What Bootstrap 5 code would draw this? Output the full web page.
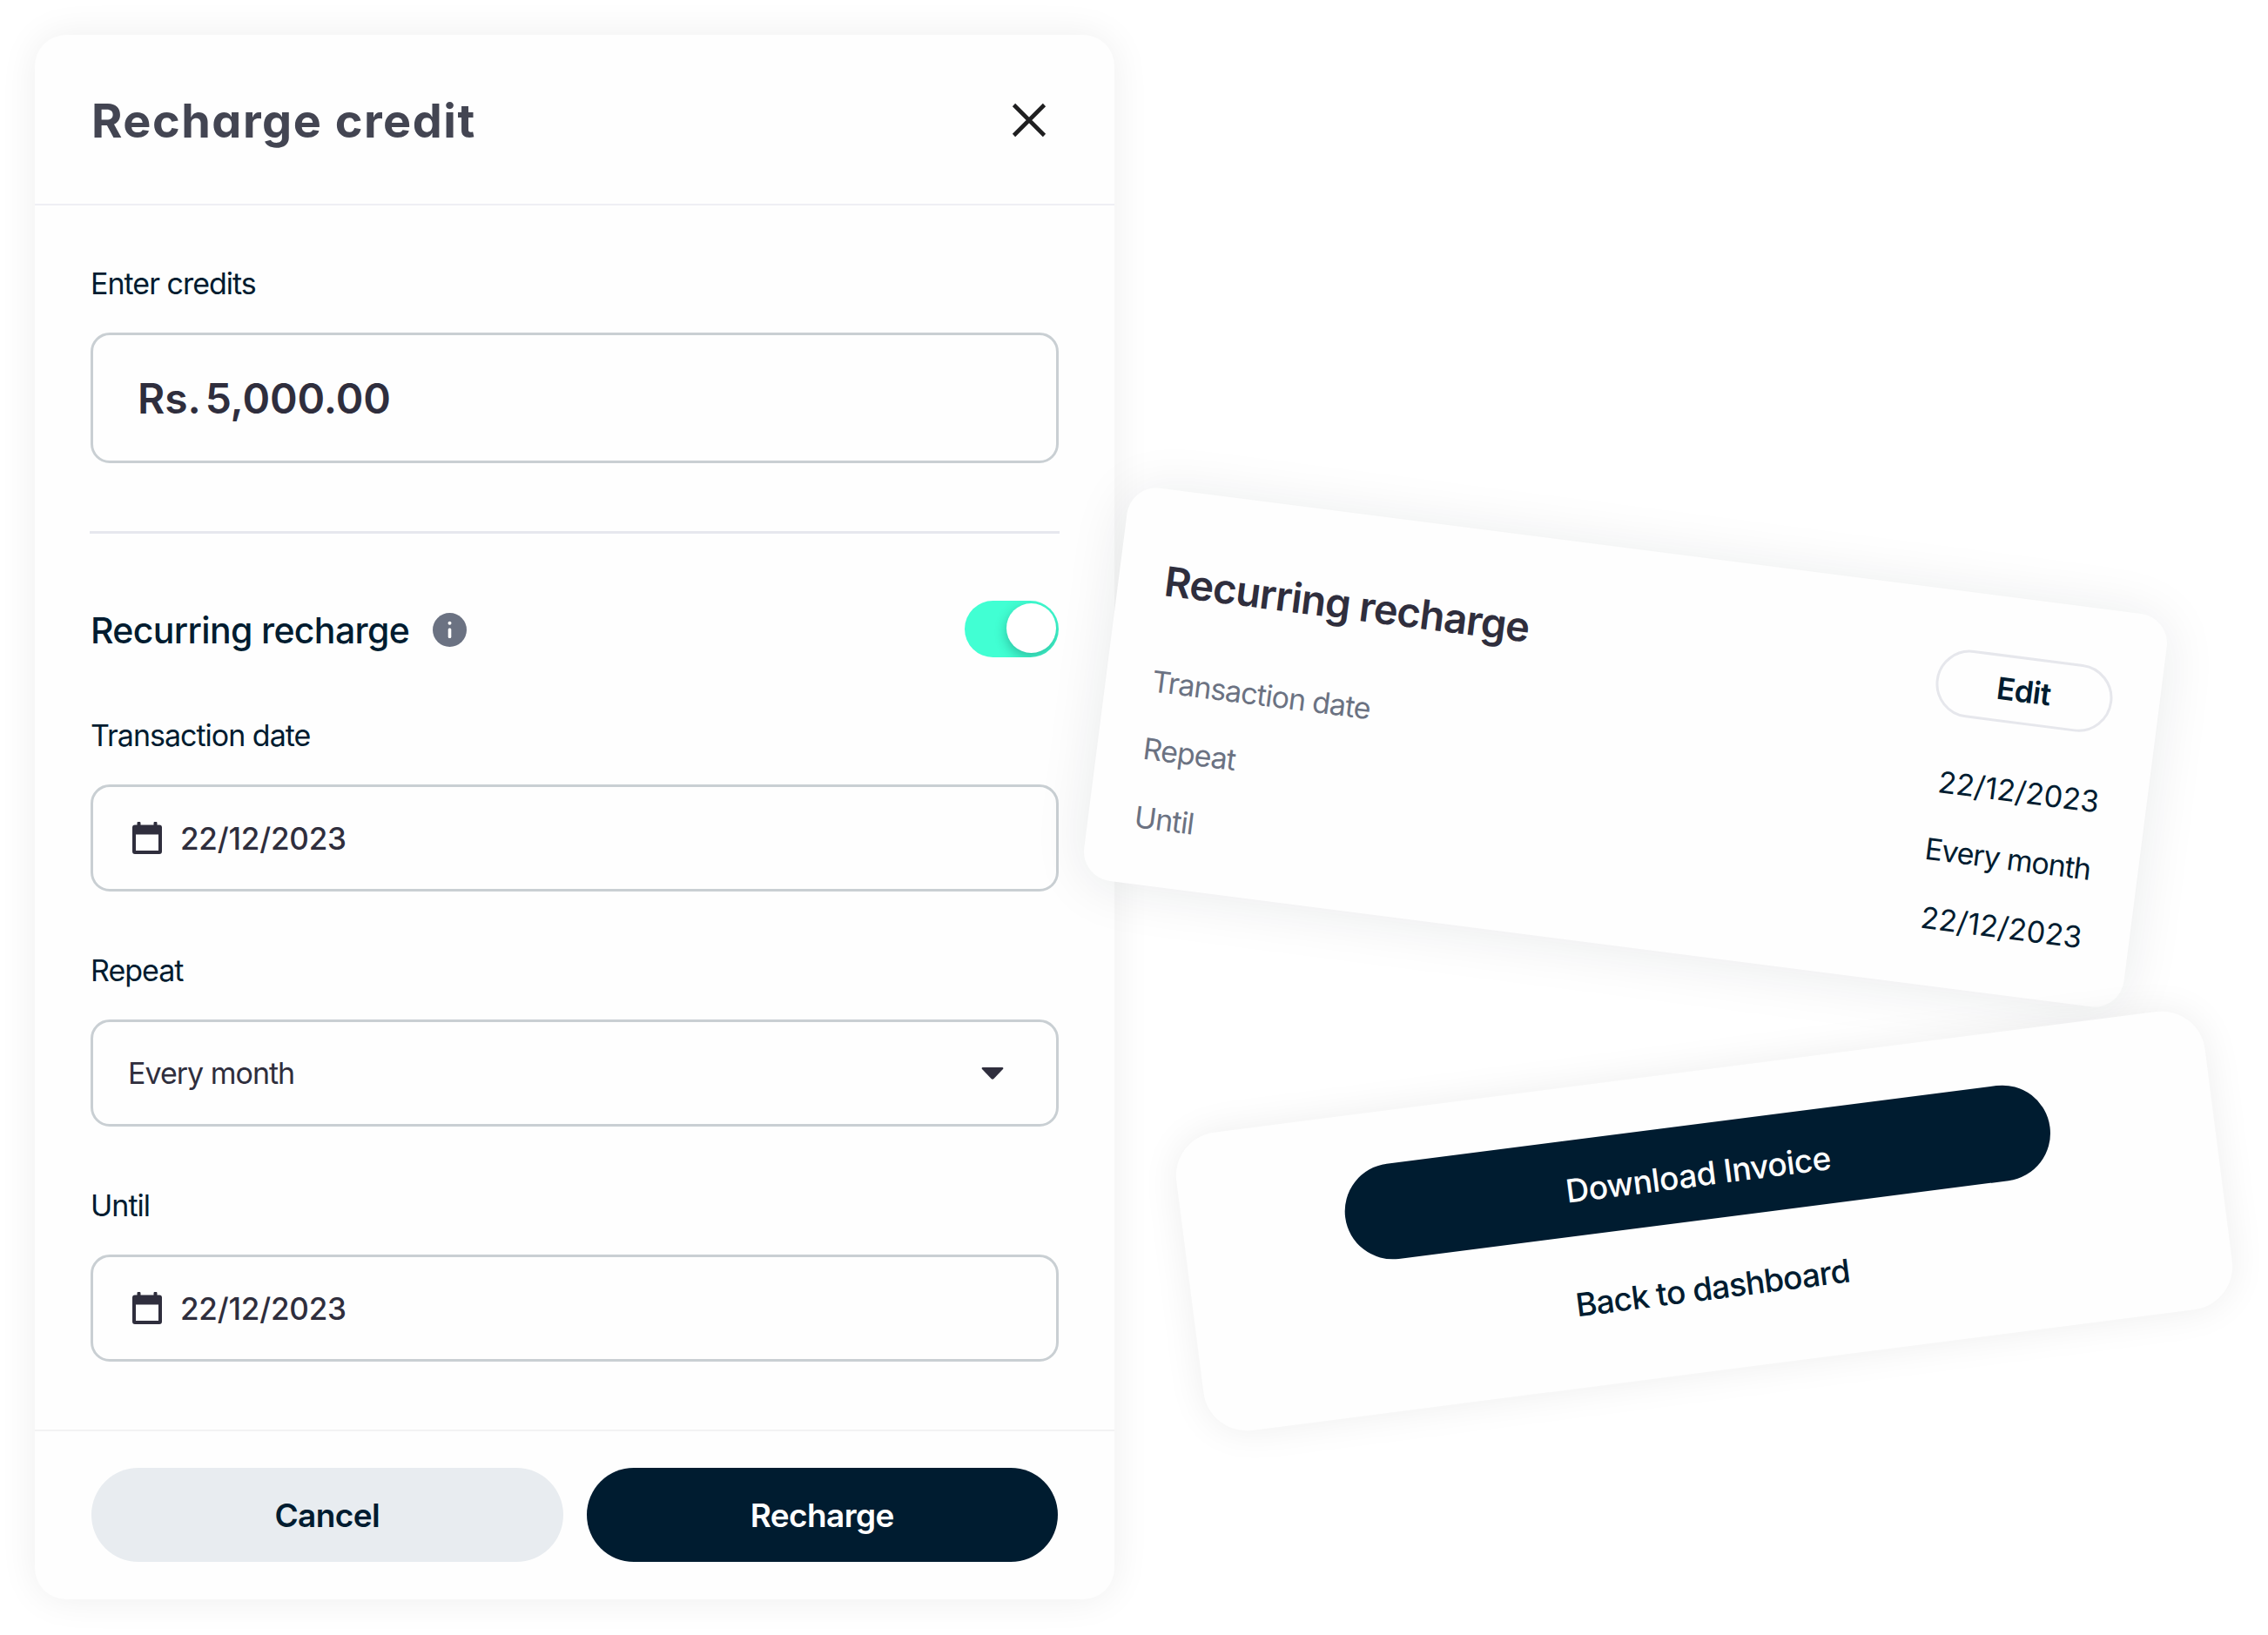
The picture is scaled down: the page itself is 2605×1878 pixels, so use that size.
<!DOCTYPE html>
<html lang="en">
<head>
  <meta charset="UTF-8">
  <meta name="viewport" content="width=device-width, initial-scale=1.0">
  <title>Recharge credit</title>
  <link href="https://cdn.jsdelivr.net/npm/bootstrap@5.3.0/dist/css/bootstrap.min.css" rel="stylesheet">
  <style>
    body {
      min-height: 1878px;
      font-family: Inter, "Liberation Sans", sans-serif;
      font-size: 34px;
      line-height: 40px;
      letter-spacing: -1px;
      color: #001c30;
      background: #fff;
      overflow: hidden;
    }
    .panel {
      background: #fefefe;
      box-shadow: 0 0 44px rgba(0, 0, 0, .07);
    }
    .recharge-panel {
      width: 1240px;
      height: 1797px;
      margin: 40px 0 41px 40px;
      border-radius: 36px;
    }
    .panel-head {
      height: 196px;
      padding: 2px 78px 0 65px;
      border-bottom: 2px solid #efeff4;
    }
    .panel-title {
      padding-top: 1px;
      font-size: 54px;
      font-weight: 700;
      line-height: 60px;
      letter-spacing: 1.5px;
      color: #434552;
      font-feature-settings: "cv11";
    }
    .panel-body { padding: 70px 64px 78px; }
    .field-label { height: 40px; margin-bottom: 36px; }
    .field-box + .field-label { margin-top: 71px; }
    .switch-row + .field-label { margin-top: 70px; }
    .field-box {
      height: 123px;
      border: 3px solid #c9cfd3;
      border-radius: 22px;
      color: #2f2e3d;
    }
    .amount-box {
      height: 150px;
      padding: 2px 0 0 51px;
      font-size: 48px;
      font-weight: 600;
      letter-spacing: -.1px;
      word-spacing: -6px;
    }
    .date-box { padding-left: 45px; gap: 21px; font-size: 35px; font-weight: 500; letter-spacing: -.2px; }
    .select-box { padding: 0 60px 0 40px; }
    .split-line { height: 3px; margin: 78px -1px 77px; background: #e6e7ee; }
    .section-title { padding-top: 2px; font-size: 41px; font-weight: 500; letter-spacing: -.65px; }
    .info-icon { margin: 2px 0 0 27px; }
    .switch-track {
      width: 108px;
      height: 65px;
      padding: 3px 3px 5px;
      background: #41ffd3;
    }
    .switch-knob {
      width: 57px;
      height: 57px;
      background: #fff;
      box-shadow: 0 5px 14px rgba(0, 40, 40, .3);
    }
    .panel-foot { padding: 42px 65px 0; gap: 27px; border-top: 2px solid #f2f2f3; }
    .btn-pill {
      height: 108px;
      padding-top: 8px;
      border: 0;
      border-radius: 54px;
      font-size: 37px;
      font-weight: 600;
      letter-spacing: -.6px;
    }
    .btn-navy, .btn-navy:hover { background: #001c30; color: #fff; }
    .btn-soft, .btn-soft:hover { background: #e8ecf0; color: #001c30; }

    .summary-panel {
      width: 1204px;
      height: 455px;
      margin: 630.7px 0 0 -15px;
      padding: 65.6px 54.5px 0 53px;
      border-radius: 34px;
      box-shadow: 0 4px 64px rgba(20, 28, 40, .09);
      transform: rotate(7.3deg);
    }
    .summary-title { padding-top: 11px; font-size: 47px; font-weight: 600; letter-spacing: -.9px; color: #2f2e3d; }
    .btn-edit, .btn-edit:hover {
      width: 204px;
      height: 78.4px;
      border: 3px solid #e6e7ec;
      border-radius: 40px;
      font-size: 35px;
      font-weight: 600;
      letter-spacing: -.6px;
      color: #001c30;
    }
    .summary-list { margin-top: 57px; }
    .summary-list .summary-row { height: 78.4px; }
    .summary-row dt { font-weight: 400; color: #6b7282; }
    .summary-date { font-size: 34.3px; letter-spacing: 0; }
    .invoice-panel {
      width: 1190.6px;
      height: 344.7px;
      margin: 144.6px 0 0 82.3px;
      padding-top: 61.4px;
      border-radius: 50px;
      transform: rotate(-7.3deg);
    }
    .invoice-panel .btn-pill {
      width: 816px;
      height: 109.3px;
      padding-top: 12px;
      border-radius: 55px;
      font-weight: 500;
      letter-spacing: -.5px;
    }
    .back-link { margin-top: 59px; font-size: 37px; font-weight: 500; letter-spacing: -.83px; color: #001c30; }
  </style>
</head>
<body>
  <!-- Calendar icon shared by both date fields -->
  <svg class="d-none">
    <symbol id="calendar" viewBox="0 0 34 37">
      <path fill="#2f2e3d" fill-rule="evenodd" d="M5.5 1.500a2 2 0 0 1 4 0v2h15v-2a2 2 0 0 1 4 0v2H31a3 3 0 0 1 3 3V34a3 3 0 0 1-3 3H3a3 3 0 0 1-3-3V6.500a3 3 0 0 1 3-3h2.500zM4 14.500v18.500h26V14.500z"/>
    </symbol>
  </svg>

  <main class="d-flex align-items-start">
    <section class="panel recharge-panel flex-shrink-0">
      <header class="panel-head d-flex align-items-center justify-content-between">
        <h1 class="panel-title mb-0">Recharge credit</h1>
        <svg width="40" height="40" viewBox="0 0 40 40" stroke="#1f1f20" stroke-width="4.600"><path d="M2.500 2.500l35 35M37.500 2.500l-35 35"/></svg>
      </header>

      <div class="panel-body">
        <div class="field-label">Enter credits</div>
        <div class="field-box amount-box d-flex align-items-center">Rs. 5,000.00</div>

        <div class="split-line"></div>

        <div class="switch-row d-flex align-items-center justify-content-between">
          <div class="d-flex align-items-center">
            <span class="section-title">Recurring recharge</span>
            <svg class="info-icon" width="39" height="39" viewBox="0 0 39 39">
              <circle cx="19.500" cy="19.500" r="19.500" fill="#6b7282"/>
              <circle cx="19.500" cy="11.800" r="2" fill="#fff"/>
              <rect x="17.700" y="17.500" width="3.600" height="11.500" rx="1.500" fill="#fff"/>
            </svg>
          </div>
          <div class="switch-track rounded-pill d-flex justify-content-end overflow-hidden">
            <div class="switch-knob rounded-circle"></div>
          </div>
        </div>

        <div class="field-label">Transaction date</div>
        <div class="field-box date-box d-flex align-items-center">
          <svg width="34" height="37"><use href="#calendar"/></svg>
          <span>22/12/2023</span>
        </div>

        <div class="field-label">Repeat</div>
        <div class="field-box select-box d-flex align-items-center justify-content-between">
          <span>Every month</span>
          <svg width="26" height="14" viewBox="0 0 26 14"><path fill="#2f2e3d" d="M1.500 0h23q1.500.5.5 2L14.500 13q-1.500 1.500-3 0L1 2Q0 .5 1.500 0z"/></svg>
        </div>

        <div class="field-label">Until</div>
        <div class="field-box date-box d-flex align-items-center">
          <svg width="34" height="37"><use href="#calendar"/></svg>
          <span>22/12/2023</span>
        </div>
      </div>

      <footer class="panel-foot d-flex">
        <button type="button" class="btn btn-pill btn-soft flex-fill w-50">Cancel</button>
        <button type="button" class="btn btn-pill btn-navy flex-fill w-50">Recharge</button>
      </footer>
    </section>

    <div class="flex-shrink-0">
      <section class="panel summary-panel">
        <div class="d-flex justify-content-between">
          <h2 class="summary-title mb-0">Recurring recharge</h2>
          <button type="button" class="btn btn-edit p-0">Edit</button>
        </div>
        <dl class="summary-list mb-0">
          <div class="summary-row d-flex justify-content-between"><dt>Transaction date</dt><dd class="summary-date">22/12/2023</dd></div>
          <div class="summary-row d-flex justify-content-between"><dt>Repeat</dt><dd>Every month</dd></div>
          <div class="summary-row d-flex justify-content-between"><dt>Until</dt><dd class="summary-date">22/12/2023</dd></div>
        </dl>
      </section>

      <section class="panel invoice-panel d-flex flex-column align-items-center">
        <button type="button" class="btn btn-pill btn-navy">Download Invoice</button>
        <a href="#" class="back-link text-decoration-none">Back to dashboard</a>
      </section>
    </div>
  </main>
  <script src="https://cdn.jsdelivr.net/npm/bootstrap@5.3.0/dist/js/bootstrap.bundle.min.js"></script>
</body>
</html>
